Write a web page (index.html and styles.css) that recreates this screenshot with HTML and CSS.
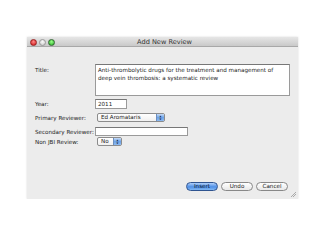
FILE: index.html
```html
<!DOCTYPE html>
<html lang="en">
<head>
    <meta charset="UTF-8">
    <title>Add New Review</title>
    <link rel="stylesheet" href="styles.css">
</head>
<body>
    <div class="window">
        <div class="titlebar">
            <div class="lights">
                <span class="light red"></span>
                <span class="light grey"></span>
                <span class="light green"></span>
            </div>
            <span class="title">Add New Review</span>
        </div>

        <div class="content">
            <div class="row row-top">
                <label>Title:</label>
                <div class="textarea">Anti-thrombolytic drugs for the treatment and management of deep vein thrombosis: a systematic review</div>
            </div>
            <div class="row row-year">
                <label>Year:</label>
                <div class="input input-year">2011</div>
            </div>
            <div class="row row-primary">
                <label>Primary Reviewer:</label>
                <div class="select select-wide">
                    <span class="select-text">Ed Aromataris</span>
                    <span class="arrows">&#9650;<br>&#9660;</span>
                </div>
            </div>
            <div class="row row-secondary">
                <label>Secondary Reviewer:</label>
                <div class="input input-second"></div>
            </div>
            <div class="row row-nonjbi">
                <label>Non JBI Review:</label>
                <div class="select select-small">
                    <span class="select-text">No</span>
                    <span class="arrows">&#9650;<br>&#9660;</span>
                </div>
            </div>

            <div class="buttons">
                <button class="btn btn-default">Insert</button>
                <button class="btn">Undo</button>
                <button class="btn">Cancel</button>
            </div>
            <div class="grip"></div>
        </div>
    </div>
</body>
</html>
```

FILE: styles.css
```css
* {
    margin: 0;
    padding: 0;
    box-sizing: border-box;
}

body {
    background: #fff;
    font-family: 'DejaVu Sans', sans-serif;
    color: #222;
}

.window {
    margin: 37px 0 0 27px;
    width: 271px;
    background: #ececec;
    box-shadow: 0 0 2px rgba(0,0,0,0.15);
}

.titlebar {
    position: relative;
    height: 10px;
    background: linear-gradient(#e6e6e6, #c9c9c9);
    border-bottom: 1px solid #a8a8a8;
    display: flex;
    align-items: center;
    justify-content: center;
}

.lights {
    position: absolute;
    left: 2.5px;
    top: 1.5px;
    display: flex;
    gap: 2px;
}

.light {
    width: 7px;
    height: 7px;
    border-radius: 50%;
    border: 1px solid #777;
}

.red { background: radial-gradient(circle at 50% 35%, #f88, #c11); border-color: #922; }
.grey { background: radial-gradient(circle at 50% 35%, #fafafa, #c4c4c4); border-color: #999; }
.green { background: radial-gradient(circle at 50% 35%, #9f8, #2a2); border-color: #363; }

.title {
    font-size: 6.6px;
    color: #333;
    margin-left: 4px;
}

.content {
    position: relative;
    padding: 17px 8px 0 8px;
    height: 152px;
    font-size: 5.6px;
}

.row {
    display: grid;
    grid-template-columns: 60px 1fr;
    align-items: center;
}

.row-top {
    align-items: start;
}

.row-top label {
    padding-top: 3px;
}

.textarea {
    width: 195px;
    height: 32px;
    background: #fff;
    border: 1px solid #9a9a9a;
    border-top-color: #777;
    padding: 1px 2px;
    line-height: 8px;
    font-size: 5.6px;
}

.input {
    height: 10px;
    background: #fff;
    border: 1px solid #9a9a9a;
    border-top-color: #777;
    padding: 0 2px;
    line-height: 8px;
}

.row-year { margin-top: 3px; }
.input-year { width: 32px; }

.row-primary { margin-top: 4px; }
.row-secondary { margin-top: 5px; }
.input-second { width: 93px; height: 9px; }
.row-nonjbi { margin-top: 1px; }

.select {
    margin-left: 2px;
    height: 9px;
    display: flex;
    background: linear-gradient(#fff, #f0f0f0);
    border: 1px solid #8c8c8c;
    border-radius: 2px;
    overflow: hidden;
}

.select-wide { width: 68px; }
.select-small { width: 25px; }

.select-text {
    flex: 1;
    padding-left: 3px;
    line-height: 7px;
}

.arrows {
    width: 8px;
    font-size: 2.4px;
    line-height: 3px;
    text-align: center;
    color: #123;
    padding-top: 0.5px;
    background: linear-gradient(#c7dcf7, #6fa3e6 50%, #8cb9f0);
    border-left: 1px solid #6b8fc0;
}

.buttons {
    margin-top: 36px;
    display: flex;
    justify-content: flex-end;
    gap: 3px;
    padding-right: 2px;
}

.btn {
    width: 32px;
    height: 9px;
    border-radius: 5px;
    border: 1px solid #888;
    background: linear-gradient(#fff, #e8e8e8);
    font-family: 'DejaVu Sans', sans-serif;
    font-size: 5.6px;
    line-height: 7px;
    color: #222;
}

.btn-default {
    background: linear-gradient(#b0d0fa, #4f8fe6 55%, #82b8f3);
    border-color: #2f5490;
    color: #0a1a33;
}

.grip {
    position: absolute;
    right: 2px;
    bottom: 2px;
    width: 5px;
    height: 5px;
    background: linear-gradient(135deg, transparent 45%, #aaa 45%, #aaa 55%, transparent 55%, transparent 70%, #aaa 70%, #aaa 80%, transparent 80%);
}
```
